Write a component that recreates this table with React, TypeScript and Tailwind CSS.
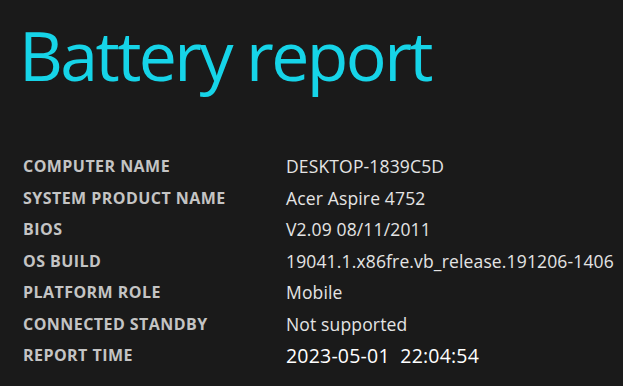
import React from "react";

const rows: [string, string][] = [
  ["COMPUTER NAME", "DESKTOP-1839C5D"],
  ["SYSTEM PRODUCT NAME", "Acer Aspire 4752"],
  ["BIOS", "V2.09 08/11/2011"],
  ["OS BUILD", "19041.1.x86fre.vb_release.191206-1406"],
  ["PLATFORM ROLE", "Mobile"],
  ["CONNECTED STANDBY", "Not supported"],
  ["REPORT TIME", "2023-05-01  22:04:54"],
];

export default function App() {
  return (
    <div
      className="w-[623px] h-[386px] overflow-hidden bg-[#1a1a1a]"
      style={{ fontFamily: '"Open Sans", "Noto Sans", sans-serif' }}
    >
      <h1 className="pt-[21px] pl-[19px] text-[68px] leading-[68px] text-[#16d4e8] font-normal tracking-[-2.6px]">
        Battery report
      </h1>
      <div className="mt-[62px] pl-[23px] grid grid-cols-[263px_1fr]">
        {rows.map(([k, v], i) => {
          const last = i === rows.length - 1;
          return (
            <React.Fragment key={k}>
              <div className="h-[31.5px] leading-[31.5px] text-[16px] font-bold text-[#c4c4c4] whitespace-nowrap tracking-[0.45px]">
                {k}
              </div>
              <div
                className={
                  last
                    ? "h-[31.5px] leading-[31.5px] text-[19.5px] whitespace-pre tracking-[0.2px] text-white"
                    : "h-[31.5px] leading-[31.5px] text-[17.5px] whitespace-pre tracking-[0.15px] text-[#e4e4e4]"
                }
              >
                {v}
              </div>
            </React.Fragment>
          );
        })}
      </div>
    </div>
  );
}
